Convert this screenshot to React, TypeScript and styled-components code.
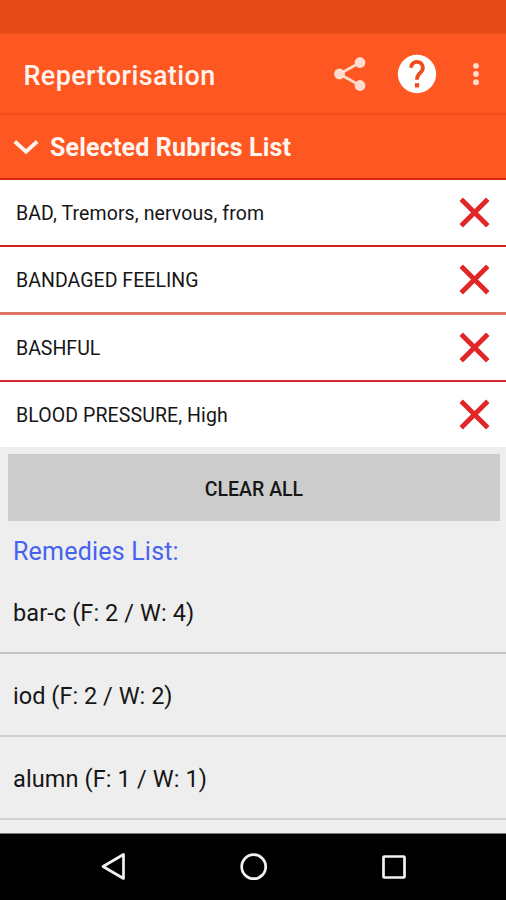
import React from "react";
import styled, { createGlobalStyle } from "styled-components";

const Global = createGlobalStyle`
  * { box-sizing: border-box; }
  body { margin: 0; background: #eee; font-family: Roboto, "Liberation Sans", sans-serif; }
  svg { display: block; flex: none; }
`;

const Screen = styled.div`
  width: 506px;
  height: 900px;
  display: flex;
  flex-direction: column;
  overflow: hidden;
  background: #eeeeee;
  color: #161616;
`;

const StatusBar = styled.div`
  flex: none;
  height: 34px;
  background: #e54b18;
  border-bottom: 1px solid #f25119;
`;

const Toolbar = styled.header`
  flex: none;
  height: 81px;
  display: flex;
  align-items: center;
  padding: 0 4px 1px 23.5px;
  background: #ff5722;
  border-bottom: 2px solid #ef4f1c;
`;

const Title = styled.h1`
  flex: 1;
  margin: 5px 0 0;
  font-size: 27px;
  line-height: 32px;
  font-weight: 500;
  letter-spacing: 0.38px;
  color: #fff4ee;
  white-space: nowrap;
`;

const IconButton = styled.button<{ $width: number }>`
  width: ${(p) => p.$width}px;
  height: 60px;
  padding: 1px 0 0;
  border: 0;
  background: none;
  display: flex;
  align-items: center;
  justify-content: center;
`;

const SectionHeader = styled.div`
  flex: none;
  height: 65px;
  display: flex;
  align-items: center;
  gap: 10px;
  padding-left: 12px;
  background: #ff5722;
  border-bottom: 2px solid #d52a10;
`;

const SectionTitle = styled.h2`
  margin: 2px 0 0;
  font-size: 25px;
  line-height: 30px;
  font-weight: 700;
  letter-spacing: 0.17px;
  color: #fff6f0;
  white-space: nowrap;
`;

const Rubrics = styled.ul`
  flex: none;
  margin: 0;
  padding: 0;
  list-style: none;
  background: #fff;
`;

const Rubric = styled.li<{ $height: number; $line?: string; $lineWidth?: number }>`
  height: ${(p) => p.$height}px;
  display: flex;
  align-items: center;
  justify-content: space-between;
  padding: 0 16px;
  border-bottom: ${(p) => (p.$line ? `${p.$lineWidth}px solid ${p.$line}` : "0")};
`;

const RubricName = styled.span<{ $spacing: number }>`
  font-size: 19.5px;
  line-height: 24px;
  letter-spacing: ${(p) => p.$spacing}px;
  margin-top: 2px;
  white-space: nowrap;
`;

const ClearButton = styled.button`
  flex: none;
  height: 67px;
  margin: 7px 6px 0 8px;
  padding: 3px 0 0;
  border: 0;
  background: #cccccc;
  color: #161616;
  font-family: inherit;
  font-size: 19.5px;
  font-weight: 500;
`;

const RemediesTitle = styled.h3`
  flex: none;
  margin: 0;
  padding: 16px 0 0 13px;
  height: 50px;
  font-size: 25px;
  line-height: 30px;
  font-weight: 400;
  letter-spacing: 0.2px;
  color: #4562f0;
`;

const Remedies = styled.ul`
  flex: 1;
  min-height: 0;
  overflow: hidden;
  margin: 0;
  padding: 0;
  list-style: none;
`;

const Remedy = styled.li<{ $line: string; $spacing: number }>`
  height: 83px;
  display: flex;
  align-items: center;
  padding: 2px 0 0 13px;
  border-bottom: 2px solid ${(p) => p.$line};
  font-size: 23.5px;
  letter-spacing: ${(p) => p.$spacing}px;
  white-space: nowrap;
`;

const NavBar = styled.nav`
  flex: none;
  height: 67px;
  display: flex;
  align-items: center;
  justify-content: space-between;
  padding: 0 97px 0 98px;
  background: #000;
  border-top: 1px solid #777;
`;

const rubrics = [
  { name: "BAD, Tremors, nervous, from", height: 67, line: "#cd251d", lineWidth: 2, spacing: 0.1 },
  { name: "BANDAGED FEELING", height: 68, line: "#de7566", lineWidth: 3, spacing: 0.04 },
  { name: "BASHFUL", height: 67, line: "#d52b30", lineWidth: 2, spacing: 0 },
  { name: "BLOOD PRESSURE, High", height: 65, spacing: 0.1 },
];

const remedies = [
  { label: "bar-c (F: 2 / W: 4)", line: "#c3c3c3", spacing: 0.1 },
  { label: "iod (F: 2 / W: 2)", line: "#cecece", spacing: 0.03 },
  { label: "alumn (F: 1 / W: 1)", line: "#d2d2d2", spacing: 0.12 },
];

const ShareIcon = () => (
  <svg width="36" height="36" viewBox="0 0 36 36" fill="#ffdbd0">
    <path d="M28 6.5 7.5 18 28 29.5" fill="none" stroke="#ffdbd0" strokeWidth="2.6" />
    <circle cx="28" cy="6.5" r="5.4" />
    <circle cx="7.5" cy="18" r="5.4" />
    <circle cx="28" cy="29.5" r="5.4" />
  </svg>
);

const HelpIcon = () => (
  <svg width="46" height="46" viewBox="0 0 24 24">
    <circle cx="12" cy="12" r="10" fill="#fff" />
    <path d="M8.95 8.7a3.05 3.05 0 1 1 5.25 2.1l-1.1 1.15C12.3 12.8 12 13.4 12 15" fill="none" stroke="#ee4a1a" strokeWidth="1.95" />
    <rect x="10.9" y="16.8" width="2.2" height="2.2" fill="#ee4a1a" />
  </svg>
);

const MoreIcon = () => (
  <svg width="8" height="26" viewBox="0 0 8 26" fill="#ffdbd0">
    <circle cx="4" cy="4.8" r="2.9" />
    <circle cx="4" cy="13" r="2.9" />
    <circle cx="4" cy="21.2" r="2.9" />
  </svg>
);

const ChevronIcon = () => (
  <svg width="28" height="20" viewBox="0 0 28 20" fill="none" stroke="#fff3ec" strokeWidth="3.8">
    <path d="M2.8 4.5 14 14.7 25.2 4.5" />
  </svg>
);

const RemoveIcon = () => (
  <svg width="31" height="31" viewBox="0 0 31 31" fill="none" stroke="#e02626" strokeWidth="4.8">
    <path d="M2.2 2.2 28.8 28.8M28.8 2.2 2.2 28.8" />
  </svg>
);

const NavIcon = ({ children }: { children: React.ReactNode }) => (
  <svg width="30" height="30" viewBox="0 0 30 30" fill="none" stroke="#f2f2f2" strokeWidth="2.7">
    {children}
  </svg>
);

export default function App() {
  return (
    <Screen>
      <Global />
      <StatusBar />
      <Toolbar>
        <Title>Repertorisation</Title>
        <IconButton $width={67} aria-label="Share"><ShareIcon /></IconButton>
        <IconButton $width={67} aria-label="Help"><HelpIcon /></IconButton>
        <IconButton $width={52} aria-label="More"><MoreIcon /></IconButton>
      </Toolbar>
      <SectionHeader>
        <ChevronIcon />
        <SectionTitle>Selected Rubrics List</SectionTitle>
      </SectionHeader>
      <Rubrics>
        {rubrics.map((r) => (
          <Rubric key={r.name} $height={r.height} $line={r.line} $lineWidth={r.lineWidth}>
            <RubricName $spacing={r.spacing}>{r.name}</RubricName>
            <RemoveIcon />
          </Rubric>
        ))}
      </Rubrics>
      <ClearButton>CLEAR ALL</ClearButton>
      <RemediesTitle>Remedies List:</RemediesTitle>
      <Remedies>
        {remedies.map((r) => (
          <Remedy key={r.label} $line={r.line} $spacing={r.spacing}>{r.label}</Remedy>
        ))}
      </Remedies>
      <NavBar>
        <NavIcon><path d="M5 14.5 25.5 2.5v24z" strokeLinejoin="round" /></NavIcon>
        <NavIcon><circle cx="14.7" cy="14.7" r="12" /></NavIcon>
        <NavIcon><rect x="4.5" y="4.5" width="21" height="21" rx="0.8" /></NavIcon>
      </NavBar>
    </Screen>
  );
}
